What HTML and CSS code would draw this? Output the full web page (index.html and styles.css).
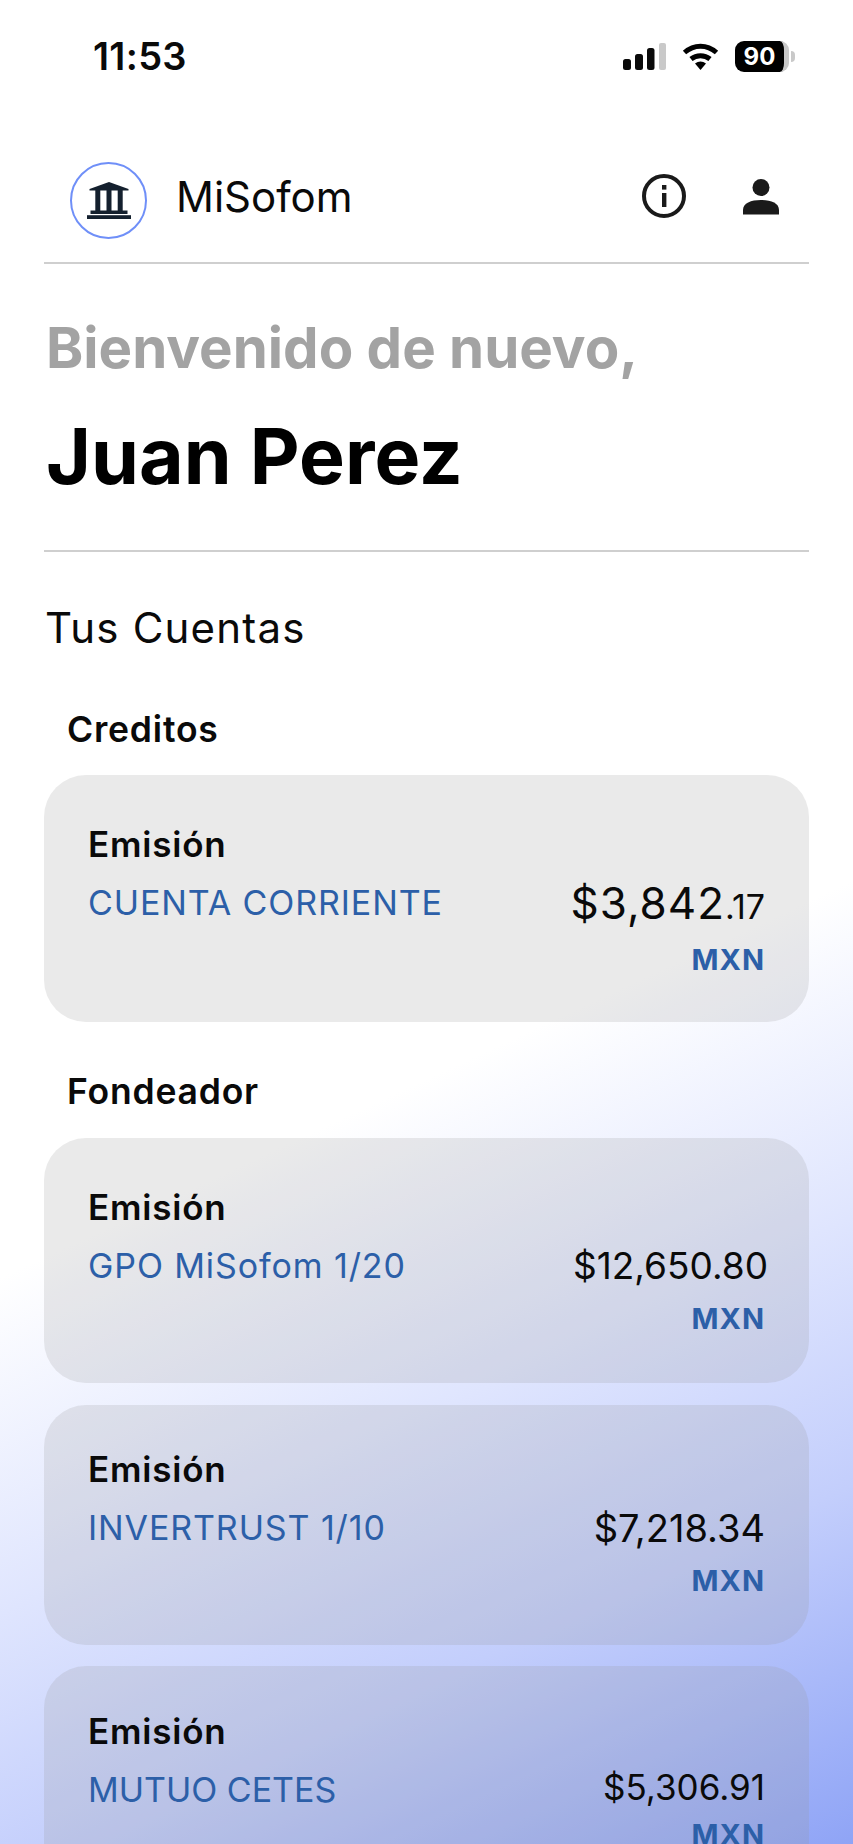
FILE: index.html
```html
<!DOCTYPE html>
<html lang="es">
<head>
<meta charset="utf-8">
<title>MiSofom</title>
<link rel="stylesheet" href="styles.css">
</head>
<body>
<div class="screen">
  <div class="status">
    <span class="time">11:53</span>
    <div class="status-icons">
      <svg class="signal" viewBox="0 0 43 27" width="43" height="27"><rect x="0" y="16" width="8" height="11" rx="2.5" fill="#0a0a0a"/><rect x="12" y="11" width="8" height="16" rx="2.5" fill="#0a0a0a"/><rect x="24" y="5" width="7.5" height="22" rx="2.5" fill="#0a0a0a"/><rect x="36" y="0" width="7" height="27" rx="2" fill="#c9c9c9"/></svg>
      <svg class="wifi" viewBox="0 0 37 27" width="37" height="27"><path d="M2.5 9.5C12 1 25 1 34.500 9.500" fill="none" stroke="#000" stroke-width="5"/><path d="M9 16C14.500 11.500 22.500 11.500 28 16" fill="none" stroke="#000" stroke-width="5"/><path d="M13 20.500C16.500 17.800 20.500 17.800 24 20.500L18.500 27Z" fill="#000"/></svg>
      <div class="battery"><span class="battery-level">90</span><span class="battery-nub"></span></div>
    </div>
  </div>

  <header class="topbar">
    <div class="brand">
      <div class="logo">
        <svg viewBox="0 0 44 37" width="44" height="37"><path d="M22 0L41.500 7V8.500H2.500V7Z" fill="#14202e"/><rect x="8.300" y="8" width="5" height="21" fill="#14202e"/><rect x="19.500" y="8" width="5" height="21" fill="#14202e"/><rect x="30.700" y="8" width="5" height="21" fill="#14202e"/><rect x="3.500" y="28.500" width="37" height="3.500" fill="#14202e"/><rect x="0" y="33.200" width="44" height="3.800" fill="#14202e"/></svg>
      </div>
      <span class="brand-name">MiSofom</span>
    </div>
    <div class="top-actions">
      <svg viewBox="0 0 44 44" width="44" height="44"><circle cx="22" cy="22" r="20" fill="none" stroke="#1a1a1a" stroke-width="4"/><rect x="20" y="11" width="4.400" height="4.600" fill="#1a1a1a"/><rect x="20" y="19" width="4.400" height="14" fill="#1a1a1a"/></svg>
      <svg class="person" viewBox="0 0 36 36" width="36" height="36"><circle cx="18" cy="8.500" r="8.500" fill="#1a1a1a"/><path d="M0 35.500V31C0 24 8 21 18 21S36 24 36 31V35.500Z" fill="#1a1a1a"/></svg>
    </div>
  </header>

  <section class="welcome">
    <p class="hello">Bienvenido de nuevo,</p>
    <h1 class="user">Juan Perez</h1>
  </section>

  <h2 class="accounts-title">Tus Cuentas</h2>

  <h3 class="group-title">Creditos</h3>
  <article class="card card-first">
    <div class="card-label">Emisión</div>
    <div class="card-row">
      <span class="card-name">CUENTA CORRIENTE</span>
      <div class="card-money">
        <span class="amount amount-wide">$3,842<small>.17</small></span>
        <span class="currency">MXN</span>
      </div>
    </div>
  </article>

  <h3 class="group-title group-second">Fondeador</h3>
  <div class="card-list">
    <article class="card">
      <div class="card-label">Emisión</div>
      <div class="card-row">
        <span class="card-name">GPO MiSofom 1/20</span>
        <div class="card-money card-money-over">
          <span class="amount amount-mid">$12,650.80</span>
          <span class="currency currency-in">MXN</span>
        </div>
      </div>
    </article>
    <article class="card card-short">
      <div class="card-label">Emisión</div>
      <div class="card-row">
        <span class="card-name">INVERTRUST 1/10</span>
        <div class="card-money">
          <span class="amount">$7,218.34</span>
          <span class="currency">MXN</span>
        </div>
      </div>
    </article>
    <article class="card card-compact">
      <div class="card-label">Emisión</div>
      <div class="card-row">
        <span class="card-name">MUTUO CETES</span>
        <div class="card-money">
          <span class="amount amount-small">$5,306.91</span>
          <span class="currency">MXN</span>
        </div>
      </div>
    </article>
  </div>
</div>
</body>
</html>
```
FILE: styles.css
```css
* { box-sizing: border-box; margin: 0; padding: 0; }
html, body { width: 853px; height: 1844px; overflow: hidden; }
body {
  font-family: Inter, "Liberation Sans", sans-serif;
  color: #0a0a0a;
  background: linear-gradient(155deg, #fff 0%, #fff 57%, #dfe5fe 72%, #c3cefc 84%, #8fa4f6 100%);
}
.screen { height: 1844px; padding: 0 44px; overflow: hidden; }

.status { height: 112px; display: flex; justify-content: space-between; align-items: flex-start; padding: 41px 0 0 49px; }
.time { font-size: 38px; line-height: 31px; font-weight: 600; letter-spacing: .3px; }
.status-icons { display: flex; align-items: center; padding-right: 14px; height: 31px; }
.signal { margin-right: 16px; }
.wifi { margin-right: 16px; }
.battery { display: flex; align-items: center; }
.battery-level {
  width: 54px; height: 31px; border-radius: 9px; background: #000; color: #fff;
  border-right: 5px solid #c9c9c9;
  font-size: 24px; line-height: 31px; font-weight: 700; text-align: center;
}
.battery-nub { width: 4px; height: 11px; margin-left: 2px; border-radius: 0 4px 4px 0; background: #c9c9c9; }

.topbar { height: 152px; padding: 50px 30px 0 26px; display: flex; justify-content: space-between; align-items: flex-start; border-bottom: 2px solid #cfcfcf; }
.brand { display: flex; align-items: flex-start; gap: 29px; }
.logo { width: 77px; height: 77px; border: 2px solid #6f8ff8; border-radius: 50%; display: flex; align-items: center; justify-content: center; }
.brand-name { font-size: 42px; line-height: 70px; }
.top-actions { display: flex; align-items: flex-start; gap: 57px; padding-top: 12px; }
.person { margin-top: 5px; }

.welcome { height: 288px; border-bottom: 2px solid #cfcfcf; padding: 53px 0 0 2px; }
.hello { font-size: 56.4px; line-height: 62px; font-weight: 700; color: #a3a3a3; }
.user { font-size: 77px; line-height: 90px; font-weight: 700; color: #000; margin-top: 32px; }

.accounts-title { font-size: 42px; line-height: 50px; font-weight: 400; letter-spacing: 1.2px; margin: 51px 0 0 1px; }
.group-title { font-size: 35.500px; line-height: 40px; font-weight: 600; margin: 57px 0 25px 23px; letter-spacing: .8px; }
.group-second { margin-top: 50px; margin-bottom: 26px; }

.card-list { display: flex; flex-direction: column; gap: 21.500px; }
.card { height: 245px; border-radius: 42px; background: rgba(150,150,150,.2); padding: 49px 44px 0 44px; }
.card-first { height: 247px; }
.card-short { height: 240px; padding-top: 44px; }
.card-compact { padding-top: 45px; }
.card-label { font-size: 35px; line-height: 40px; font-weight: 600; letter-spacing: .8px; }
.card-row { display: flex; justify-content: space-between; align-items: flex-start; margin-top: 14px; }
.card-name { font-size: 34px; line-height: 50px; color: #2c5fa8; letter-spacing: .9px; }
.card-compact .card-name { letter-spacing: 0; }
.card-money { display: flex; flex-direction: column; align-items: flex-end; }
.card-money-over { margin-right: -3px; }
.amount { font-size: 38px; line-height: 50px; }
.amount-wide { font-size: 44px; letter-spacing: 1px; }
.amount-wide small { font-size: 34px; letter-spacing: 0; }
.amount-mid { font-size: 37px; }
.amount-small { font-size: 35px; line-height: 44px; }
.currency { font-size: 29px; line-height: 40px; font-weight: 700; color: #2c5fa8; letter-spacing: 1px; margin-top: 8px; }
.currency-in { margin-right: 3px; }
.card-compact .currency { margin-top: 6px; }
```
